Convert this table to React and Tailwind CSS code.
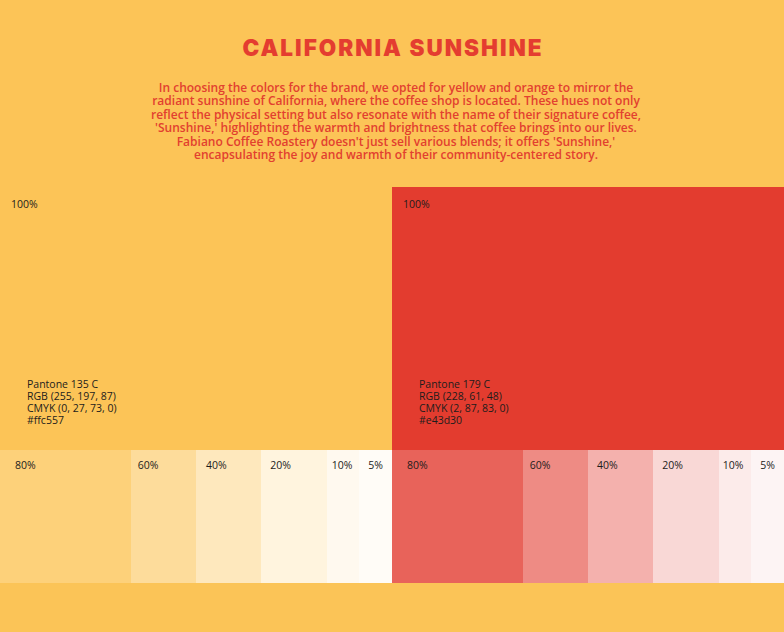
import React from "react";

const font = { fontFamily: '"Open Sans", "Noto Sans", sans-serif' };

const yellowTints = [
  { label: "80%", bg: "bg-[#fdd17a]", pl: "pl-[15px]" },
  { label: "60%", bg: "bg-[#fddc9b]", pl: "pl-[7px]" },
  { label: "40%", bg: "bg-[#fee8bd]", pl: "pl-[10px]" },
  { label: "20%", bg: "bg-[#fff4de]", pl: "pl-[9px]" },
  { label: "10%", bg: "bg-[#fff9ef]", pl: "pl-[5px]" },
  { label: "5%", bg: "bg-[#fffcf7]", pl: "pl-[9px]" },
];

const redTints = [
  { label: "80%", bg: "bg-[#e8635a]", pl: "pl-[15px]" },
  { label: "60%", bg: "bg-[#ee8b84]", pl: "pl-[7px]" },
  { label: "40%", bg: "bg-[#f4b1ad]", pl: "pl-[9px]" },
  { label: "20%", bg: "bg-[#f9d8d6]", pl: "pl-[9px]" },
  { label: "10%", bg: "bg-[#fcebea]", pl: "pl-[4px]" },
  { label: "5%", bg: "bg-[#fdf4f4]", pl: "pl-[9px]" },
];

function Tints({ items }) {
  return (
    <div className="grid h-full grid-cols-[2fr_1fr_1fr_1fr_0.5fr_0.5fr]">
      {items.map((t) => (
        <div key={t.label} className={`${t.bg} ${t.pl} pt-[9px]`}>
          <span className="block text-[10.5px] font-medium leading-[12px] text-[#1c1c1c]">{t.label}</span>
        </div>
      ))}
    </div>
  );
}

function Block({ bg, lines }) {
  return (
    <div className={`${bg} flex flex-col justify-between pl-[11px] pt-[11px] pb-[24px]`}>
      <span className="text-[10.5px] font-medium leading-[12px] text-[#1c1c1c]">100%</span>
      <div className="pl-[16px] text-[10.5px] font-medium leading-[12px] text-[#1c1c1c]">
        {lines.map((l) => (
          <div key={l}>{l}</div>
        ))}
      </div>
    </div>
  );
}

export default function App() {
  return (
    <div className="flex h-[632px] w-full flex-col bg-[#fcc457]" style={font}>
      <div className="h-[187px] pt-[37px] text-center">
        <h1
          className="pl-[2px] text-[22.5px] font-black uppercase leading-[22px] tracking-[2px] text-[#e43d30]"
          style={{ fontFamily: 'Inter, "DejaVu Sans", sans-serif' }}
        >
          California Sunshine
        </h1>
        <p className="mt-[22px] pl-[8px] text-[12px] font-semibold leading-[13.4px] text-[#e2402f]">
          In choosing the colors for the brand, we opted for yellow and orange to mirror the
          <br />
          radiant sunshine of California, where the coffee shop is located. These hues not only
          <br />
          reflect the physical setting but also resonate with the name of their signature coffee,
          <br />
          'Sunshine,' highlighting the warmth and brightness that coffee brings into our lives.
          <br />
          Fabiano Coffee Roastery doesn't just sell various blends; it offers 'Sunshine,'
          <br />
          encapsulating the joy and warmth of their community-centered story.
        </p>
      </div>
      <div className="grid h-[263px] grid-cols-2">
        <Block
          bg="bg-[#fcc457]"
          lines={["Pantone 135 C", "RGB (255, 197, 87)", "CMYK (0, 27, 73, 0)", "#ffc557"]}
        />
        <Block
          bg="bg-[#e33c2f]"
          lines={["Pantone 179 C", "RGB (228, 61, 48)", "CMYK (2, 87, 83, 0)", "#e43d30"]}
        />
      </div>
      <div className="grid h-[133px] grid-cols-2">
        <Tints items={yellowTints} />
        <Tints items={redTints} />
      </div>
      <div className="flex-1 bg-[#fbc457]" />
    </div>
  );
}
